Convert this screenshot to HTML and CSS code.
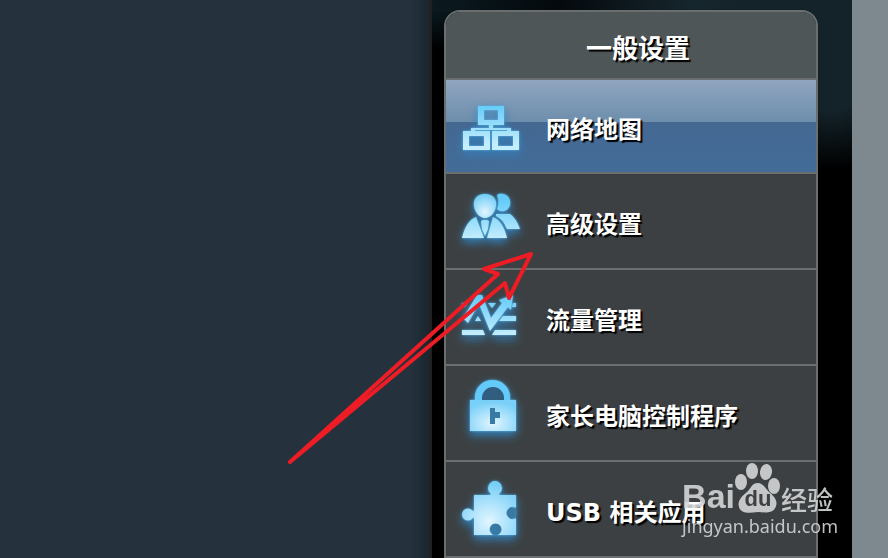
FILE: index.html
```html
<!DOCTYPE html>
<html lang="zh-CN">
  <head>
    <meta charset="UTF-8" />
    <meta name="viewport" content="width=device-width, initial-scale=1.0" />
    <title>一般设置</title>
    <link rel="stylesheet" href="styles.css">
  </head>
  <body>
    <div class="page">
      <div class="side-panel"></div>
      <div class="stage">
        <nav class="menu" aria-labelledby="menu-title">
          <h2 class="menu-title" id="menu-title">一般设置</h2>
          <a class="menu-item active" href="#">
            <svg class="icon" viewBox="0 0 64 72" aria-hidden="true">
              <defs>
                <linearGradient id="ice" x1="0" y1="0" x2="0" y2="72" gradientUnits="userSpaceOnUse">
                  <stop offset="0.2" stop-color="#62cbfa" />
                  <stop offset="0.75" stop-color="#c4edfd" />
                </linearGradient>
                <radialGradient id="shine" cx="0.5" cy="0.75" r="0.7">
                  <stop offset="0" stop-color="#e2f6ff" />
                  <stop offset="1" stop-color="#78cff8" />
                </radialGradient>
              </defs>
              <path fill="url(#ice)" fill-rule="evenodd" d="M18 16h26v19H33v3h18v3h8v19H32V41h15v-1H15v1h15v19H3V41h8v-3h18v-3H18zM24 20v10h14V20zM9 46v10h15V46zM38 46v10h15V46z" />
            </svg>
            <span class="label">网络地图</span>
          </a>
          <a class="menu-item" href="#">
            <svg class="icon" viewBox="0 0 64 72" aria-hidden="true">
              <path fill="url(#ice)" d="M37 10C40 8 46 8 49 13C52 19 49 25 44 26Q40 27 37 24Q40 17 37 10zM36 29H50Q56 33 60 44H47Q43 34 36 31z" />
              <path fill="url(#shine)" d="M25 9C33 9 37 14 36 21C35 28 30 33 25 33S15 28 14 21C13 14 17 9 25 9z" />
              <path fill="url(#ice)" d="M2 53Q6 36 16 32L24 53zM27 53L33 32Q43 36 47 53zM21 36L23 35H27L29 36L28 44L25 51L22 44z" />
            </svg>
            <span class="label">高级设置</span>
          </a>
          <a class="menu-item" href="#">
            <svg class="icon" viewBox="0 0 64 72" aria-hidden="true">
              <path fill="url(#ice)" d="M2 49H23L25 54H2zM35 49H56V54H32zM15 40L18 35L21 40zM43 35H56V40H39zM28 22H36L32 27zM53 22H56V26H52zM2 22H7L5 26H2z" />
              <path fill="url(#ice)" d="M3 37L17 14H22L31 37L42 22L39 19L53 14L51 29L48 26L30 50L19 23L8 42z" />
            </svg>
            <span class="label">流量管理</span>
          </a>
          <a class="menu-item" href="#">
            <svg class="icon" viewBox="0 0 64 72" aria-hidden="true">
              <path fill="#315d7e" d="M20 24V18Q22 9 33 9T46 18V24z" />
              <path fill="#63cafa" d="M15 24V20A17.500 17 0 0 1 50 20V24H44V21A11 11 0 0 0 22 21V24z" />
              <path fill="url(#shine)" d="M10 23H56V54H10z" />
              <path fill="#397aa5" d="M30 31H35V35H40V41H35V47H30z" />
            </svg>
            <span class="label">家长电脑控制程序</span>
          </a>
          <a class="menu-item" href="#">
            <svg class="icon" viewBox="0 0 64 72" aria-hidden="true">
              <circle fill="#397aa5" cx="50" cy="40" r="6" />
              <circle fill="#397aa5" cx="36" cy="56" r="6" />
              <path fill="url(#shine)" d="M14 22H30Q32 21 30 20A7 7 0 1 1 40 20Q38 21 40 22H56V35A6 6 0 1 0 56 45V62H38A6 6 0 1 0 33 62H14V45Q13 44 12 46A6 6 0 1 1 12 37Q13 39 14 37z" />
            </svg>
            <span class="label">USB 相关应用</span>
          </a>
        </nav>

        <!-- hand-drawn pointer to the second entry -->
        <svg class="pointer" viewBox="280 240 260 230" aria-hidden="true">
          <path d="M290 462L498 274L484 269L531 254L509 298L505 283z" />
        </svg>

        <div class="watermark">
          <div class="brand">
            <span class="bai">Bai</span>
            <span class="paw">
              <svg viewBox="0 0 46 50" aria-hidden="true">
                <ellipse cx="6" cy="19" rx="6" ry="8" />
                <ellipse cx="17" cy="8" rx="6" ry="8" />
                <ellipse cx="31" cy="9" rx="6" ry="8" transform="rotate(8 31 9)" />
                <ellipse cx="39" cy="23" rx="6" ry="8" />
                <path d="M23 20C28 20 30 25 34 29C39 33 43 38 41 43C39 50 32 50 23 49C14 50 6 51 4 44C2 38 7 33 12 29C16 25 17 20 23 20z" />
              </svg>
              <span class="du">du</span>
            </span>
            <span class="jingyan">经验</span>
          </div>
          <div class="site">jingyan.baidu.com</div>
        </div>
      </div>
      <div class="gutter"></div>
    </div>
  </body>
</html>
```
FILE: styles.css
```css
body {
  margin: 0;
  background-color: #000;
  color: #fff;
  font-family: "DejaVu Sans", "Noto Sans CJK SC", sans-serif;
}
.page {
  display: flex;
  min-height: 100vh;
}
.side-panel {
  flex: 1;
  background: linear-gradient(to left, #1a252c, #25323e 20px);
  border-right: 2px solid #211f20;
}
.stage {
  position: relative;
  box-sizing: border-box;
  width: 420px;
  padding: 10px 34px 0 12px;
  background:
    radial-gradient(ellipse 90px 150px at 400px 20px, #14232a 60%, transparent),
    linear-gradient(to right, #0b1a1f, #04090d 30%, #16262d 62%, #101c22) top / 100% 12px no-repeat,
    radial-gradient(ellipse 60px 50px at 0 0, #0b2027, transparent),
    #000;
}
.gutter {
  width: 36px;
  background-color: #7e898f;
}
.menu {
  border: 2px solid #6b6e6e;
  border-bottom: none;
  border-radius: 16px 16px 0 0;
  overflow: hidden;
}
.menu-title {
  box-sizing: border-box;
  height: 68px;
  margin: 0;
  padding: 8px 0 0 14px;
  border-bottom: 2px solid #6b6e6e;
  background-color: #4f5658;
  font-size: 26px;
  line-height: 58px;
  text-align: center;
  text-shadow: 2px 2px 1px #000;
}
.menu-item {
  display: flex;
  align-items: center;
  gap: 22px;
  height: 94px;
  padding-left: 14px;
  border-bottom: 2px solid #6b6e6e;
  background-color: #3c4042;
  color: #fff;
  font-size: 24px;
  font-weight: bold;
  line-height: 32px;
  text-decoration: none;
}
.menu-item.active {
  height: 92px;
  background: linear-gradient(#90a5c0, #6d8eac 42px, #446892 42px, #436c98);
}
.icon {
  flex: none;
  width: 64px;
  height: 72px;
  overflow: visible;
  filter: drop-shadow(0 0 1px #5db8e8) drop-shadow(0 4px 5px #3282bd);
}
.label {
  padding-top: 8px;
  text-shadow: 2px 2px 1px #000;
}
.pointer {
  position: absolute;
  top: 240px;
  left: -152px;
  width: 260px;
  height: 230px;
}
.pointer path {
  fill: none;
  stroke: #ee1c24;
  stroke-width: 4;
  stroke-linejoin: round;
}
.watermark {
  position: absolute;
  top: 463px;
  right: 14px;
  color: #d4d5d6;
  opacity: 0.9;
}
.brand {
  display: flex;
  align-items: flex-end;
  height: 50px;
}
.bai {
  font-family: "Liberation Sans", sans-serif;
  font-size: 34px;
  font-weight: bold;
  line-height: 34px;
}
.paw {
  position: relative;
  width: 46px;
  height: 50px;
}
.paw svg {
  display: block;
  fill: #d4d5d6;
}
.du {
  position: absolute;
  top: 25px;
  left: 0;
  width: 46px;
  color: #3c4042;
  font-family: "Liberation Sans", sans-serif;
  font-size: 22px;
  font-weight: bold;
  line-height: 22px;
  text-align: center;
}
.jingyan {
  font-family: "Noto Sans CJK SC", sans-serif;
  font-size: 26px;
  font-weight: 500;
  line-height: 28px;
}
.site {
  font-family: "Noto Sans", sans-serif;
  font-size: 18px;
  line-height: 26px;
}
```
